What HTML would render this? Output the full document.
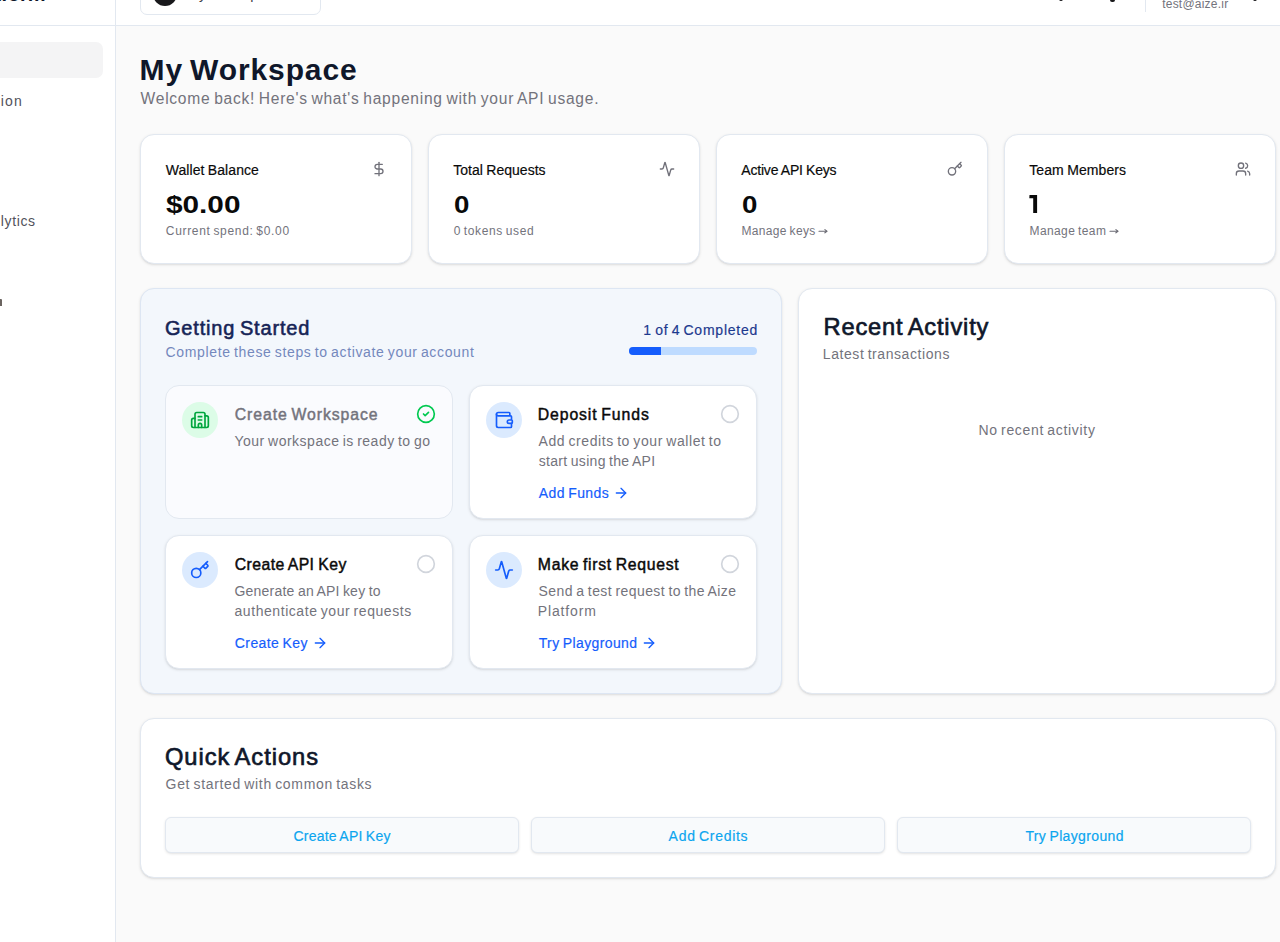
<!DOCTYPE html>
<html><head><meta charset="utf-8"><title>My Workspace</title>
<style>
*{box-sizing:border-box;margin:0;padding:0}
html,body{width:1280px;height:942px;overflow:hidden;background:#fafafa;font-family:"Liberation Sans",sans-serif}
.a{position:absolute}
.t{position:absolute;white-space:nowrap;line-height:1;font-family:"Liberation Sans",sans-serif}
.card{position:absolute;background:#fff;border:1px solid #e2e8f0;border-radius:14px;box-shadow:0 1px 3px rgba(0,0,0,.10),0 1px 2px -1px rgba(0,0,0,.10)}
svg{position:absolute;fill:none;stroke-linecap:round;stroke-linejoin:round;stroke-width:2;overflow:visible}
.ic{stroke:#71717a}
.circ{position:absolute;width:36px;height:36px;border-radius:50%}
.btn{position:absolute;height:36px;width:354px;top:817px;background:#f8fafc;border:1px solid #e2e8f0;border-radius:6px;box-shadow:0 1px 3px rgba(0,0,0,.09),0 1px 2px -1px rgba(0,0,0,.09)}
</style></head><body>
<!-- sidebar + header -->
<div class="a" style="left:0;top:0;width:116px;height:942px;background:#fff;border-right:1px solid #e2e8f0"></div>
<div class="a" style="left:0;top:0;width:1280px;height:26px;background:#fff;border-bottom:1px solid #e2e8f0"></div>
<div class="a" style="left:115px;top:0;width:1px;height:26px;background:#e2e8f0"></div>
<div class="a" style="left:-10px;top:42px;width:113px;height:36px;background:#f4f4f5;border-radius:7px"></div>
<div class="a" style="left:0;top:298.5px;width:1.6px;height:7.5px;background:#6b6460;border-radius:0 1px 0 0"></div>
<!-- header bits -->
<span class="t" style="left:-40px;top:-16.5px;font-size:20px;font-weight:bold;color:#0f172a;width:85.5px;text-align:right;display:block">Platform</span>
<div class="a" style="left:140px;top:-25px;width:181px;height:40px;border:1px solid #e2e8f0;border-radius:7px;background:#fff"></div>
<div class="a" style="left:153px;top:-18px;width:24px;height:24px;border-radius:50%;background:#18181b"></div>
<span class="t" style="left:187px;top:-13px;font-size:14.3px;color:#3f3f46">My Workspace</span>
<div class="a" style="left:1145px;top:0;width:1px;height:12px;background:#e2e8f0"></div>
<div class="a" style="left:1059px;top:-3px;width:4px;height:4px;border-radius:2px;background:#18181b"></div>
<div class="a" style="left:1110px;top:-3px;width:5px;height:4.5px;border-radius:2px;background:#18181b"></div>
<div class="a" style="left:1253px;top:-3px;width:4px;height:4px;border-radius:2px;background:#18181b"></div>

<!-- stat cards -->
<div class="card" style="left:140px;top:134px;width:272px;height:130px"></div>
<div class="card" style="left:428px;top:134px;width:272px;height:130px"></div>
<div class="card" style="left:716px;top:134px;width:272px;height:130px"></div>
<div class="card" style="left:1004px;top:134px;width:272px;height:130px"></div>
<svg class="ic" style="left:371px;top:161px" width="16" height="16" viewBox="0 0 24 24"><line x1="12" x2="12" y1="2" y2="22"/><path d="M17 5H9.5a3.5 3.5 0 0 0 0 7h5a3.5 3.5 0 0 1 0 7H6"/></svg>
<svg class="ic" style="left:659px;top:161px" width="16" height="16" viewBox="0 0 24 24"><path d="M22 12h-2.48a2 2 0 0 0-1.93 1.46l-2.35 8.36a.25.25 0 0 1-.48 0L9.24 2.18a.25.25 0 0 0-.48 0l-2.35 8.36A2 2 0 0 1 4.49 12H2"/></svg>
<svg class="ic" style="left:947px;top:161px" width="16" height="16" viewBox="0 0 24 24"><path d="m15.5 7.5 2.3 2.3a1 1 0 0 0 1.4 0l2.1-2.1a1 1 0 0 0 0-1.4L19 4"/><path d="m21 2-9.6 9.6"/><circle cx="7.5" cy="15.5" r="5.5"/></svg>
<svg class="ic" style="left:1235px;top:161px" width="16" height="16" viewBox="0 0 24 24"><path d="M16 21v-2a4 4 0 0 0-4-4H6a4 4 0 0 0-4 4v2"/><circle cx="9" cy="7" r="4"/><path d="M22 21v-2a4 4 0 0 0-3-3.87"/><path d="M16 3.13a4 4 0 0 1 0 7.75"/></svg>

<!-- getting started -->
<div class="card" style="left:140px;top:288px;width:642px;height:406px;background:#f3f7fc;border-color:#dde6f3"></div>
<div class="a" style="left:629px;top:347px;width:128px;height:8px;border-radius:4px;background:#bedbff;overflow:hidden"><div style="width:32px;height:8px;background:#155dfc"></div></div>
<div class="card" style="left:165px;top:385px;width:288px;height:134px;background:#fafbfe;box-shadow:none"></div>
<div class="card" style="left:469px;top:385px;width:288px;height:134px"></div>
<div class="card" style="left:165px;top:535px;width:288px;height:134px"></div>
<div class="card" style="left:469px;top:535px;width:288px;height:134px"></div>
<div class="circ" style="left:182px;top:402px;background:#dcfce7"></div>
<div class="circ" style="left:486px;top:402px;background:#dbeafe"></div>
<div class="circ" style="left:182px;top:552px;background:#dbeafe"></div>
<div class="circ" style="left:486px;top:552px;background:#dbeafe"></div>
<svg style="left:190px;top:410px;stroke:#00a63e" width="20" height="20" viewBox="0 0 24 24"><path d="M10 12h4"/><path d="M10 8h4"/><path d="M14 21v-3a2 2 0 0 0-4 0v3"/><path d="M6 10H4a2 2 0 0 0-2 2v7a2 2 0 0 0 2 2h16a2 2 0 0 0 2-2V9a2 2 0 0 0-2-2h-2"/><path d="M6 21V5a2 2 0 0 1 2-2h8a2 2 0 0 1 2 2v16"/></svg>
<svg style="left:494px;top:410px;stroke:#155dfc" width="20" height="20" viewBox="0 0 24 24"><path d="M19 7V4a1 1 0 0 0-1-1H5a2 2 0 0 0 0 4h15a1 1 0 0 1 1 1v4h-3a2 2 0 0 0 0 4h3a1 1 0 0 0 1-1v-2a1 1 0 0 0-1-1"/><path d="M3 5v14a2 2 0 0 0 2 2h15a1 1 0 0 0 1-1v-4"/></svg>
<svg style="left:190px;top:560px;stroke:#155dfc" width="20" height="20" viewBox="0 0 24 24"><path d="m15.5 7.5 2.3 2.3a1 1 0 0 0 1.4 0l2.1-2.1a1 1 0 0 0 0-1.4L19 4"/><path d="m21 2-9.6 9.6"/><circle cx="7.5" cy="15.5" r="5.5"/></svg>
<svg style="left:494px;top:560px;stroke:#155dfc" width="20" height="20" viewBox="0 0 24 24"><path d="M22 12h-2.48a2 2 0 0 0-1.93 1.46l-2.35 8.36a.25.25 0 0 1-.48 0L9.24 2.18a.25.25 0 0 0-.48 0l-2.35 8.36A2 2 0 0 1 4.49 12H2"/></svg>
<!-- status icons -->
<svg style="left:416px;top:404px;stroke:#00c950" width="20" height="20" viewBox="0 0 24 24"><circle cx="12" cy="12" r="10"/><path d="m9 12 2 2 4-4"/></svg>
<svg style="left:720px;top:404px;stroke:#d1d5dc" width="20" height="20" viewBox="0 0 24 24"><circle cx="12" cy="12" r="10"/></svg>
<svg style="left:416px;top:554px;stroke:#d1d5dc" width="20" height="20" viewBox="0 0 24 24"><circle cx="12" cy="12" r="10"/></svg>
<svg style="left:720px;top:554px;stroke:#d1d5dc" width="20" height="20" viewBox="0 0 24 24"><circle cx="12" cy="12" r="10"/></svg>
<!-- arrows -->
<svg style="left:613.2px;top:484.5px;stroke:#155dfc" width="16" height="16" viewBox="0 0 24 24"><path d="M5 12h14"/><path d="m12 5 7 7-7 7"/></svg>
<svg style="left:312px;top:634.5px;stroke:#155dfc" width="16" height="16" viewBox="0 0 24 24"><path d="M5 12h14"/><path d="m12 5 7 7-7 7"/></svg>
<svg style="left:641.3px;top:634.5px;stroke:#155dfc" width="16" height="16" viewBox="0 0 24 24"><path d="M5 12h14"/><path d="m12 5 7 7-7 7"/></svg>

<!-- recent activity -->
<div class="card" style="left:798px;top:288px;width:478px;height:406px"></div>
<!-- quick actions -->
<div class="card" style="left:140px;top:718px;width:1136px;height:160px"></div>
<div class="btn" style="left:165px"></div>
<div class="btn" style="left:531px"></div>
<div class="btn" style="left:897px"></div>

<!-- custom glyphs -->
<svg style="left:1029px;top:194px;stroke:none;fill:#0a0a0a" width="10" height="20" viewBox="0 0 10 20"><path d="M0.5 1 H8.1 V19 H4.2 V4.3 H0.3 Z"/></svg>
<svg style="left:818px;top:227px;stroke:#6a6a73;stroke-width:1.1" width="10" height="8" viewBox="0 0 10 8"><path d="M1 4.2H8.8"/><path d="M6.9 2.6 8.9 4.2 6.9 5.8"/></svg>
<svg style="left:1108.8px;top:227px;stroke:#6a6a73;stroke-width:1.1" width="10" height="8" viewBox="0 0 10 8"><path d="M1 4.2H8.8"/><path d="M6.9 2.6 8.9 4.2 6.9 5.8"/></svg>
<span class="t" style="left:139.60px;top:55px;font-size:30px;font-weight:bold;color:#0f172a;letter-spacing:0.884px;word-spacing:-2.174px">My Workspace</span>
<span class="t" style="left:140.60px;top:91px;font-size:15.6px;font-weight:normal;color:#73737c;letter-spacing:0.726px;word-spacing:-1.303px">Welcome back! Here's what's happening with your API usage.</span>
<span class="t" style="left:165.69px;top:163px;font-size:14px;font-weight:normal;color:#0a0a0a;letter-spacing:0.079px;word-spacing:-0.681px;-webkit-text-stroke:0.18px #0a0a0a">Wallet Balance</span>
<span class="t" style="left:165.80px;top:194px;font-size:23.7px;font-weight:bold;color:#0a0a0a;transform:scaleX(1.2554);transform-origin:0 0">$0.00</span>
<span class="t" style="left:165.80px;top:225px;font-size:12px;font-weight:normal;color:#73737c;letter-spacing:0.680px;word-spacing:-1.196px">Current spend: $0.00</span>
<span class="t" style="left:453.29px;top:163px;font-size:14px;font-weight:normal;color:#0a0a0a;letter-spacing:0.026px;word-spacing:-0.628px;-webkit-text-stroke:0.18px #0a0a0a">Total Requests</span>
<span class="t" style="left:453.90px;top:194px;font-size:23.7px;font-weight:bold;color:#0a0a0a;transform:scaleX(1.1692);transform-origin:0 0">0</span>
<span class="t" style="left:453.70px;top:225px;font-size:12px;font-weight:normal;color:#73737c;letter-spacing:0.629px;word-spacing:-1.145px">0 tokens used</span>
<span class="t" style="left:741.29px;top:163px;font-size:14px;font-weight:normal;color:#0a0a0a;letter-spacing:-0.197px;word-spacing:-0.405px;-webkit-text-stroke:0.18px #0a0a0a">Active API Keys</span>
<span class="t" style="left:741.90px;top:194px;font-size:23.7px;font-weight:bold;color:#0a0a0a;transform:scaleX(1.1692);transform-origin:0 0">0</span>
<span class="t" style="left:741.50px;top:225px;font-size:12px;font-weight:normal;color:#73737c;letter-spacing:0.316px;word-spacing:-0.832px">Manage keys</span>
<span class="t" style="left:1029.19px;top:163px;font-size:14px;font-weight:normal;color:#0a0a0a;letter-spacing:0.105px;word-spacing:-0.707px;-webkit-text-stroke:0.18px #0a0a0a">Team Members</span>
<span class="t" style="left:1029.50px;top:225px;font-size:12px;font-weight:normal;color:#73737c;letter-spacing:0.393px;word-spacing:-0.909px">Manage team</span>
<span class="t" style="left:164.88px;top:318px;font-size:20px;font-weight:normal;color:#162456;letter-spacing:0.839px;word-spacing:-1.699px;-webkit-text-stroke:0.56px #162456">Getting Started</span>
<span class="t" style="left:165.60px;top:345px;font-size:14px;font-weight:normal;color:#7488bd;letter-spacing:0.651px;word-spacing:-1.253px">Complete these steps to activate your account</span>
<span class="t" style="left:643.29px;top:323px;font-size:14px;font-weight:normal;color:#1c398e;letter-spacing:0.774px;word-spacing:-1.376px;-webkit-text-stroke:0.18px #1c398e">1 of 4 Completed</span>
<span class="t" style="left:234.72px;top:407px;font-size:15.8px;font-weight:normal;color:#73737c;letter-spacing:0.925px;word-spacing:-1.557px;-webkit-text-stroke:0.44px #73737c">Create Workspace</span>
<span class="t" style="left:234.50px;top:434px;font-size:14px;font-weight:normal;color:#73737c;letter-spacing:0.498px;word-spacing:-1.100px">Your workspace is ready to go</span>
<span class="t" style="left:537.72px;top:407px;font-size:15.8px;font-weight:normal;color:#0a0a0a;letter-spacing:0.894px;word-spacing:-1.526px;-webkit-text-stroke:0.44px #0a0a0a">Deposit Funds</span>
<span class="t" style="left:538.50px;top:434px;font-size:14px;font-weight:normal;color:#73737c;letter-spacing:0.592px;word-spacing:-1.194px">Add credits to your wallet to</span>
<span class="t" style="left:538.70px;top:454px;font-size:14px;font-weight:normal;color:#73737c;letter-spacing:0.307px;word-spacing:-0.909px">start using the API</span>
<span class="t" style="left:538.79px;top:486px;font-size:14px;font-weight:normal;color:#155dfc;letter-spacing:0.402px;word-spacing:-1.004px;-webkit-text-stroke:0.18px #155dfc">Add Funds</span>
<span class="t" style="left:234.72px;top:557px;font-size:15.8px;font-weight:normal;color:#0a0a0a;letter-spacing:0.441px;word-spacing:-1.073px;-webkit-text-stroke:0.44px #0a0a0a">Create API Key</span>
<span class="t" style="left:234.50px;top:584px;font-size:14px;font-weight:normal;color:#73737c;letter-spacing:0.216px;word-spacing:-0.818px">Generate an API key to</span>
<span class="t" style="left:234.50px;top:604px;font-size:14px;font-weight:normal;color:#73737c;letter-spacing:0.561px;word-spacing:-1.163px">authenticate your requests</span>
<span class="t" style="left:234.79px;top:636px;font-size:14px;font-weight:normal;color:#155dfc;letter-spacing:0.411px;word-spacing:-1.013px;-webkit-text-stroke:0.18px #155dfc">Create Key</span>
<span class="t" style="left:537.82px;top:557px;font-size:15.8px;font-weight:normal;color:#0a0a0a;letter-spacing:0.701px;word-spacing:-1.334px;-webkit-text-stroke:0.44px #0a0a0a">Make first Request</span>
<span class="t" style="left:538.60px;top:584px;font-size:14px;font-weight:normal;color:#73737c;letter-spacing:0.431px;word-spacing:-1.033px">Send a test request to the Aize</span>
<span class="t" style="left:537.80px;top:604px;font-size:14px;font-weight:normal;color:#73737c;letter-spacing:0.848px;word-spacing:0.000px">Platform</span>
<span class="t" style="left:538.69px;top:636px;font-size:14px;font-weight:normal;color:#155dfc;letter-spacing:0.375px;word-spacing:-0.977px;-webkit-text-stroke:0.18px #155dfc">Try Playground</span>
<span class="t" style="left:823.53px;top:316px;font-size:23.7px;font-weight:normal;color:#0f172a;letter-spacing:0.806px;word-spacing:-1.754px;-webkit-text-stroke:0.66px #0f172a">Recent Activity</span>
<span class="t" style="left:822.80px;top:347px;font-size:14px;font-weight:normal;color:#73737c;letter-spacing:0.570px;word-spacing:-1.172px">Latest transactions</span>
<span class="t" style="left:978.50px;top:423px;font-size:14px;font-weight:normal;color:#73737c;letter-spacing:0.682px;word-spacing:-1.284px">No recent activity</span>
<span class="t" style="left:164.93px;top:746px;font-size:23.7px;font-weight:normal;color:#0f172a;letter-spacing:0.956px;word-spacing:-1.905px;-webkit-text-stroke:0.66px #0f172a">Quick Actions</span>
<span class="t" style="left:165.60px;top:777px;font-size:14px;font-weight:normal;color:#73737c;letter-spacing:0.676px;word-spacing:-1.278px">Get started with common tasks</span>
<span class="t" style="left:293.49px;top:829px;font-size:14px;font-weight:normal;color:#0ba5ef;letter-spacing:0.221px;word-spacing:-0.823px;-webkit-text-stroke:0.18px #0ba5ef">Create API Key</span>
<span class="t" style="left:668.59px;top:829px;font-size:14px;font-weight:normal;color:#0ba5ef;letter-spacing:0.720px;word-spacing:-1.322px;-webkit-text-stroke:0.18px #0ba5ef">Add Credits</span>
<span class="t" style="left:1025.39px;top:829px;font-size:14px;font-weight:normal;color:#0ba5ef;letter-spacing:0.358px;word-spacing:-0.960px;-webkit-text-stroke:0.18px #0ba5ef">Try Playground</span>
<span class="t" style="left:0.80px;top:94px;font-size:14px;font-weight:normal;color:#52525b;letter-spacing:1.152px;word-spacing:0.000px">ion</span>
<span class="t" style="left:0.80px;top:214px;font-size:14px;font-weight:normal;color:#52525b;letter-spacing:0.618px;word-spacing:0.000px">lytics</span>
<span class="t" style="left:1162.20px;top:-2px;font-size:12px;font-weight:normal;color:#73737c;letter-spacing:0.224px;word-spacing:0.000px">test@aize.ir</span>
</body></html>
